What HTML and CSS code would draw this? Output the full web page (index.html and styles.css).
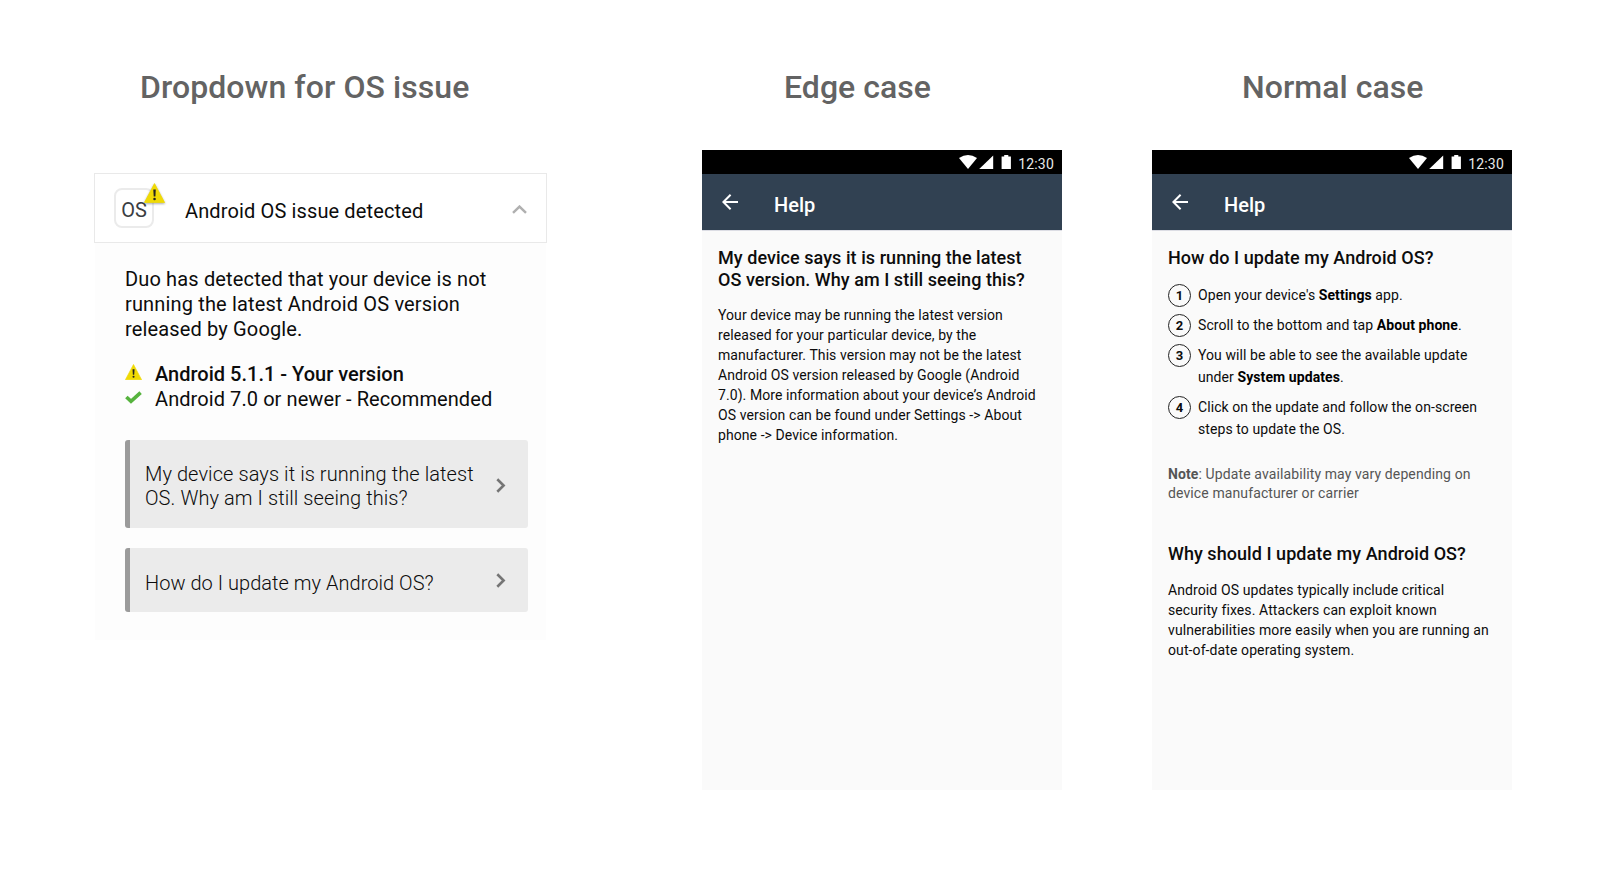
FILE: index.html
```
<!DOCTYPE html>
<html lang="en">
<head>
<meta charset="utf-8">
<title>OS issue help</title>
<link rel="stylesheet" href="styles.css">
</head>
<body>
<svg class="defs" width="0" height="0">
  <defs>
    <symbol id="warning" viewBox="0 0 21 20">
      <path d="M10.5 .6 20.6 19.6H.4Z" fill="#f0da05" stroke="#f0da05" stroke-width=".8" stroke-linejoin="round"/>
      <path d="M9.3 6.6h2.5l-.4 6.8H9.7Z" fill="#222"/>
      <circle cx="10.55" cy="16" r="1.3" fill="#222"/>
    </symbol>
    <symbol id="next" viewBox="0 0 10 15">
      <path d="M1.3 1.3 7.6 7.5 1.3 13.7" fill="none" stroke="#757575" stroke-width="2.6"/>
    </symbol>
    <symbol id="back" viewBox="0 0 16 16">
      <path d="M16 8H1.6M8.6 .8 1.4 8l7.2 7.2" fill="none" stroke="#fff" stroke-width="2"/>
    </symbol>
    <symbol id="status" viewBox="0 0 53 14">
      <path d="M0 3.1Q9-3.1 18 3.1L9 14Z" fill="#fff"/>
      <path d="M34.2 .4V14H20.2Z" fill="#fff"/>
      <path d="M42.6 1.4h2.6V0h4.1v1.4h2.6V14h-9.3Z" fill="#fff"/>
    </symbol>
  </defs>
</svg>
<main class="board">
  <section class="column column-dropdown">
    <h1 class="title">Dropdown for OS issue</h1>
    <div class="card">
      <header class="card-head">
        <div class="os-icon">OS<svg class="os-badge"><use href="#warning"/></svg></div>
        <h2 class="card-title">Android OS issue detected</h2>
        <svg class="collapse" viewBox="0 0 15 9"><path d="M1 7.8 7.5 1.6 14 7.8" fill="none" stroke="#b0b0b0" stroke-width="2.5"/></svg>
      </header>
      <div class="card-body">
        <p class="intro">Duo has detected that your device is not<br>running the latest Android OS version<br>released by Google.</p>
        <ul class="versions">
          <li class="version current"><svg class="mark"><use href="#warning"/></svg>Android 5.1.1 - Your version</li>
          <li class="version"><svg class="mark mark-check" viewBox="0 0 17 13"><path d="M1.4 6 6 10.4 15.6 1.6" fill="none" stroke="#56b33e" stroke-width="3.6"/></svg>Android 7.0 or newer - Recommended</li>
        </ul>
        <a class="link link-tall"><span>My device says it is running the latest<br>OS. Why am I still seeing this?</span><svg class="next"><use href="#next"/></svg></a>
        <a class="link"><span>How do I update my Android OS?</span><svg class="next"><use href="#next"/></svg></a>
      </div>
    </div>
  </section>

  <section class="column column-edge">
    <h1 class="title">Edge case</h1>
    <div class="phone">
      <div class="statusbar"><svg class="status-icons"><use href="#status"/></svg><span>12:30</span></div>
      <div class="appbar"><svg class="back"><use href="#back"/></svg><span class="appbar-title">Help</span></div>
      <div class="content">
        <h2 class="question">My device says it is running the latest<br>OS version. Why am I still seeing this?</h2>
        <p class="answer">Your device may be running the latest version<br>released for your particular device, by the<br>manufacturer. This version may not be the latest<br>Android OS version released by Google (Android<br>7.0). More information about your device’s Android<br>OS version can be found under Settings -&gt; About<br>phone -&gt; Device information.</p>
      </div>
    </div>
  </section>

  <section class="column column-normal">
    <h1 class="title">Normal case</h1>
    <div class="phone">
      <div class="statusbar"><svg class="status-icons"><use href="#status"/></svg><span>12:30</span></div>
      <div class="appbar"><svg class="back"><use href="#back"/></svg><span class="appbar-title">Help</span></div>
      <div class="content">
        <h2 class="question">How do I update my Android OS?</h2>
        <ol class="steps">
          <li class="step"><span class="num">1</span><span>Open your device's <b>Settings</b> app.</span></li>
          <li class="step"><span class="num">2</span><span>Scroll to the bottom and tap <b>About phone</b>.</span></li>
          <li class="step"><span class="num">3</span><span>You will be able to see the available update<br>under <b>System updates</b>.</span></li>
          <li class="step"><span class="num">4</span><span>Click on the update and follow the on-screen<br>steps to update the OS.</span></li>
        </ol>
        <p class="note"><b>Note</b>: Update availability may vary depending on<br>device manufacturer or carrier</p>
        <h2 class="question">Why should I update my Android OS?</h2>
        <p class="answer answer-why">Android OS updates typically include critical<br>security fixes. Attackers can exploit known<br>vulnerabilities more easily when you are running an<br>out-of-date operating system.</p>
      </div>
    </div>
  </section>
</main>
</body>
</html>
```
FILE: styles.css
```
* { box-sizing: border-box; margin: 0; padding: 0; }
body { background: #fff; color: #0c0c0c; font-family: Roboto, sans-serif; white-space: nowrap; }
ul, ol { list-style: none; }
svg { display: block; flex: none; }
.defs { position: absolute; }

.board { display: flex; height: 882px; padding: 68px 88px 0 94px; }
.column-dropdown { width: 453px; }
.column-edge { width: 360px; margin-left: 155px; }
.column-normal { width: 360px; margin-left: 90px; }
.title { font-size: 32px; font-weight: 500; line-height: 38px; color: #636363; }
.column-dropdown .title { padding-left: 46px; letter-spacing: .08px; }
.column-edge .title { padding-left: 82px; letter-spacing: .05px; }
.column-normal .title { padding-left: 90px; letter-spacing: .05px; }

/* Dropdown card */
.card { margin-top: 67px; }
.card-head { display: flex; align-items: center; height: 70px; padding: 0 19px 0 19px; border: 1px solid #e9e9e9; background: #fff; }
.os-icon { position: relative; width: 40px; height: 40px; border: 2px solid #ebebeb; border-radius: 8px; font-size: 20px; line-height: 40px; text-align: center; color: #3a3d42; }
.os-badge { position: absolute; left: 28px; top: -7px; width: 21px; height: 20px; overflow: visible; filter: drop-shadow(0 1px 1px rgba(0,0,0,.35)); }
.card-title { flex: 1; padding: 6px 0 0 31px; font-size: 20px; font-weight: 400; line-height: 24px; letter-spacing: .13px; }
.collapse { width: 15px; height: 9px; margin-top: 3px; }
.card-body { width: 451px; height: 397px; margin-left: 1px; padding: 24px 0 0 30px; background: #fdfdfd; }
.intro { font-size: 20px; line-height: 25px; letter-spacing: .15px; }
.versions { margin-top: 20px; }
.version { display: flex; align-items: center; gap: 13px; font-size: 20px; line-height: 25px; letter-spacing: .08px; }
.version.current { font-weight: 500; letter-spacing: .01px; }
.mark { width: 17px; height: 16px; margin-top: -5px; }
.mark-check { height: 13px; }
.link { display: flex; width: 403px; height: 64px; margin-top: 20px; padding: 23px 22px 0 15px; border-left: 5px solid #9b9b9b; border-radius: 3px; background: #ebebeb; font-size: 20px; font-weight: 300; line-height: 24px; letter-spacing: .03px; justify-content: space-between; }
.link-tall { height: 88px; margin-top: 28px; padding-top: 22px; letter-spacing: .08px; }
.next { width: 10px; height: 15px; margin-top: 2px; }
.link-tall .next { margin-top: 16px; }

/* Phone screens */
.phone { height: 640px; margin-top: 44px; background: #fafafa; }
.statusbar { display: flex; justify-content: flex-end; height: 24px; padding: 5px 8px 0 0; gap: 6px; background: #000; color: #e8e8e8; font-size: 14px; font-weight: 400; line-height: 19px; letter-spacing: .2px; }
.status-icons { width: 53px; height: 14px; }
.appbar { display: flex; height: 56px; padding: 20px 20px 0; gap: 36px; background: #314152; box-shadow: 0 1px 0 #dcdde4; }
.back { width: 16px; height: 16px; }
.appbar-title { font-size: 20px; font-weight: 500; line-height: 22px; color: #fff; }
.content { padding: 17px 16px 0; }
.question { font-size: 18px; font-weight: 500; line-height: 22px; letter-spacing: .055px; }
.answer { margin-top: 14px; font-size: 14px; line-height: 20px; letter-spacing: .08px; }
.answer-why { margin-top: 15px; letter-spacing: .1px; }
.steps { display: grid; gap: 8px; margin-top: 15px; }
.step { display: flex; gap: 7px; font-size: 14px; line-height: 22px; letter-spacing: .08px; }
.step b { font-weight: 700; color: #000; }
.num { width: 23px; height: 23px; border: 1px solid #222; border-radius: 50%; font-size: 13px; font-weight: 700; line-height: 22px; text-align: center; letter-spacing: 0; }
.step:nth-child(-n+2) { height: 22px; }
.note { margin: 25px 0 40px; font-size: 14px; line-height: 19px; letter-spacing: .11px; color: #555; }
```
